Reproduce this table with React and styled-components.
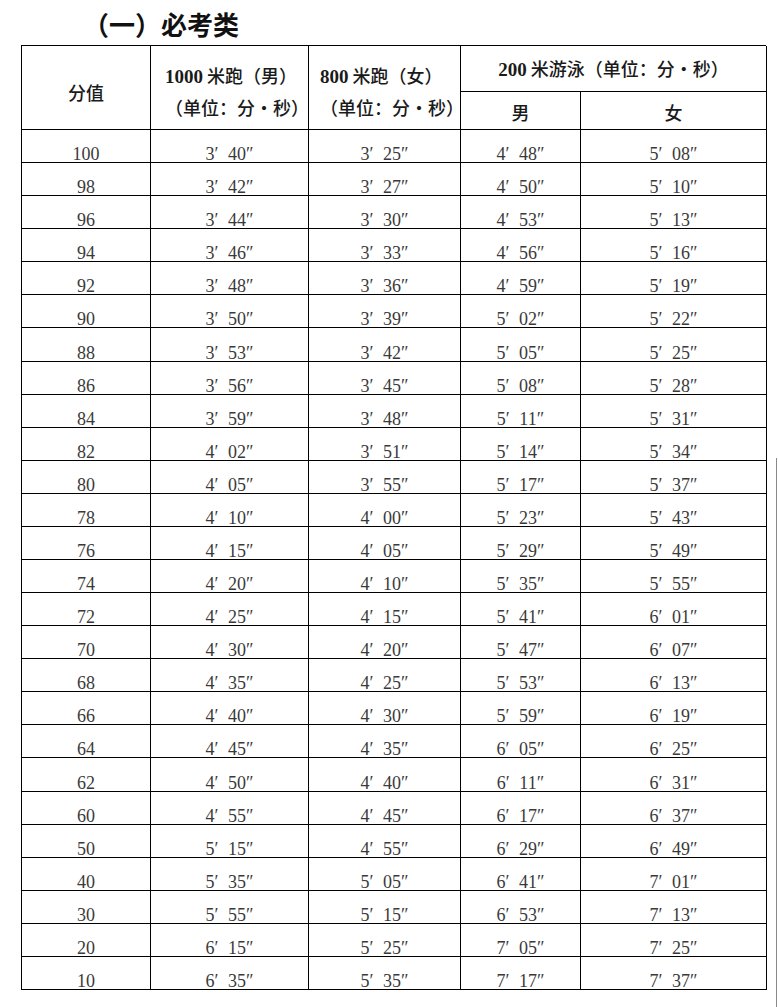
import React from 'react'
import styled, { createGlobalStyle } from 'styled-components'

const rows = [
  ['100', "3′ 40″", "3′ 25″", "4′ 48″", "5′ 08″"],
  ['98', "3′ 42″", "3′ 27″", "4′ 50″", "5′ 10″"],
  ['96', "3′ 44″", "3′ 30″", "4′ 53″", "5′ 13″"],
  ['94', "3′ 46″", "3′ 33″", "4′ 56″", "5′ 16″"],
  ['92', "3′ 48″", "3′ 36″", "4′ 59″", "5′ 19″"],
  ['90', "3′ 50″", "3′ 39″", "5′ 02″", "5′ 22″"],
  ['88', "3′ 53″", "3′ 42″", "5′ 05″", "5′ 25″"],
  ['86', "3′ 56″", "3′ 45″", "5′ 08″", "5′ 28″"],
  ['84', "3′ 59″", "3′ 48″", "5′ 11″", "5′ 31″"],
  ['82', "4′ 02″", "3′ 51″", "5′ 14″", "5′ 34″"],
  ['80', "4′ 05″", "3′ 55″", "5′ 17″", "5′ 37″"],
  ['78', "4′ 10″", "4′ 00″", "5′ 23″", "5′ 43″"],
  ['76', "4′ 15″", "4′ 05″", "5′ 29″", "5′ 49″"],
  ['74', "4′ 20″", "4′ 10″", "5′ 35″", "5′ 55″"],
  ['72', "4′ 25″", "4′ 15″", "5′ 41″", "6′ 01″"],
  ['70', "4′ 30″", "4′ 20″", "5′ 47″", "6′ 07″"],
  ['68', "4′ 35″", "4′ 25″", "5′ 53″", "6′ 13″"],
  ['66', "4′ 40″", "4′ 30″", "5′ 59″", "6′ 19″"],
  ['64', "4′ 45″", "4′ 35″", "6′ 05″", "6′ 25″"],
  ['62', "4′ 50″", "4′ 40″", "6′ 11″", "6′ 31″"],
  ['60', "4′ 55″", "4′ 45″", "6′ 17″", "6′ 37″"],
  ['50', "5′ 15″", "4′ 55″", "6′ 29″", "6′ 49″"],
  ['40', "5′ 35″", "5′ 05″", "6′ 41″", "7′ 01″"],
  ['30', "5′ 55″", "5′ 15″", "6′ 53″", "7′ 13″"],
  ['20', "6′ 15″", "5′ 25″", "7′ 05″", "7′ 25″"],
  ['10', "6′ 35″", "5′ 35″", "7′ 17″", "7′ 37″"],
]

const App = () => {
  return (
    <Page>
      <GlobalStyle />
      <Title>（一）必考类</Title>
      <Table>
        <HeadCell $col="1" $row="1 / 3" $pad="8px 0 0 0">分值</HeadCell>
        <HeadCell $col="2" $row="1 / 3" $left $pad="6px 0 0 14px">
          <Line><Num>1000</Num> 米跑（男）</Line>
          <Line>（单位：分•秒）</Line>
        </HeadCell>
        <HeadCell $col="3" $row="1 / 3" $left $pad="6px 0 0 11px">
          <Line><Num>800</Num> 米跑（女）</Line>
          <Line>（单位：分•秒）</Line>
        </HeadCell>
        <HeadCell $col="4 / 6" $row="1">
          <Line><Num>200</Num> 米游泳（单位：分•秒）</Line>
        </HeadCell>
        <HeadCell $col="4" $row="2" $pad="2px 0 0 0">男</HeadCell>
        <HeadCell $col="5" $row="2" $pad="2px 0 0 0">女</HeadCell>
        {rows.map((r) =>
          r.map((v, i) => <Cell key={r[0] + '-' + i}>{v}</Cell>)
        )}
      </Table>
      <ScanEdge />
    </Page>
  )
}

export default App

const GlobalStyle = createGlobalStyle`
  html, body {
    margin: 0;
    padding: 0;
    background: #ffffff;
  }
  body {
    font-family: "Liberation Serif", "Noto Sans CJK SC", serif;
  }
`

const Page = styled.div`
  position: relative;
  width: 778px;
  height: 1007px;
  overflow: hidden;
  background: #fff;
`

const Title = styled.h2`
  margin: 0;
  height: 45px;
  padding-left: 83px;
  box-sizing: border-box;
  font-family: "Noto Sans CJK SC", sans-serif;
  font-size: 26px;
  font-weight: 700;
  line-height: 48px;
  color: #111;
`

const Table = styled.div`
  margin-left: 21px;
  width: 745px;
  display: grid;
  grid-template-columns: 129px 158px 152px 120px 186px;
  grid-template-rows: 46px 38px;
  grid-auto-rows: 33.08px;
  border-left: 1px solid #000;
  border-top: 1px solid #000;
  box-sizing: border-box;
`

const HeadCell = styled.div`
  grid-column: ${(p) => p.$col};
  grid-row: ${(p) => p.$row};
  border-right: 1px solid #000;
  border-bottom: 1px solid #000;
  display: flex;
  flex-direction: column;
  justify-content: center;
  align-items: ${(p) => (p.$left ? 'flex-start' : 'center')};
  padding: ${(p) => p.$pad || '0'};
  font-family: "Noto Sans CJK SC", sans-serif;
  font-weight: 500;
  font-size: 18px;
  color: #1a1a1a;
  line-height: 30px;
  white-space: nowrap;
  min-width: 0;
`

const Line = styled.div`
  font-family: "Noto Sans CJK SC", sans-serif;
  font-weight: 500;
`

const Num = styled.span`
  font-family: "Liberation Serif", serif;
  font-weight: 700;
  font-size: 19px;
`

const Cell = styled.div`
  border-right: 1px solid #000;
  border-bottom: 1px solid #000;
  display: flex;
  align-items: flex-end;
  justify-content: center;
  font-family: "Liberation Serif", serif;
  font-size: 18px;
  line-height: 15px;
  word-spacing: 5px;
  color: #3a3a3a;
  white-space: pre;
  overflow: hidden;
`

const ScanEdge = styled.div`
  position: absolute;
  left: 776px;
  top: 458px;
  width: 1px;
  height: 549px;
  background: #8a8a8a;
`
